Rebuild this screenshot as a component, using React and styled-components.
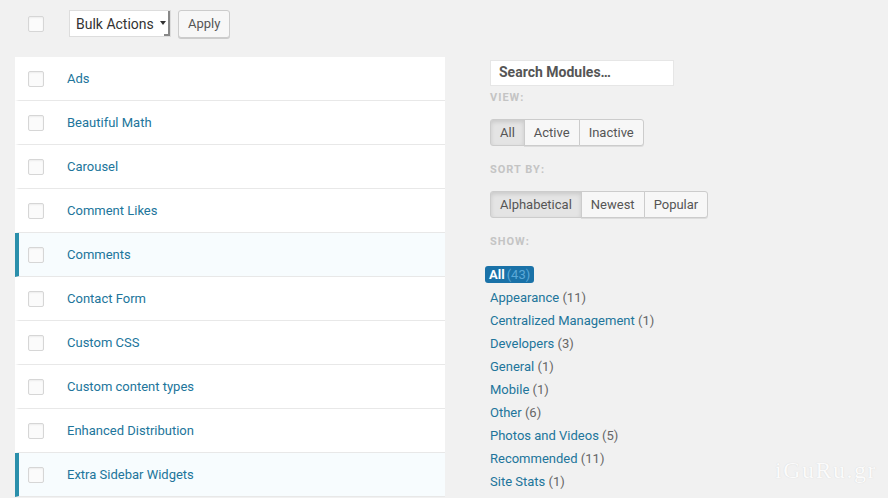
import React from "react";
import styled, { createGlobalStyle } from "styled-components";

const GlobalStyle = createGlobalStyle`
  body {
    margin: 0;
    background: #f1f1f1;
    font-family: Roboto, "Noto Sans", Arial, sans-serif;
  }
`;

const Page = styled.div`
  position: relative;
  width: 888px;
  height: 498px;
  overflow: hidden;
  background: #f1f1f1;
  display: grid;
  grid-template-columns: 430px 1fr;
  column-gap: 45px;
  padding: 0 0 0 15px;
  box-sizing: border-box;
`;

const LeftColumn = styled.div`
  display: flex;
  flex-direction: column;
`;

const Toolbar = styled.div`
  display: flex;
  align-items: center;
  height: 57px;
  padding-left: 13px;
  padding-bottom: 10px;
  box-sizing: border-box;
`;

const Checkbox = styled.span`
  display: inline-block;
  width: 14px;
  height: 14px;
  border: 1px solid #d6d6d6;
  border-radius: 2px;
  background: #fbfbfb;
  box-shadow: inset 0 1px 2px rgba(0, 0, 0, 0.06);
  flex-shrink: 0;
`;

const Select = styled.div`
  display: flex;
  align-items: center;
  margin-left: 25px;
  height: 27px;
  width: 102px;
  box-sizing: border-box;
  border: 1px solid #ddd;
  background: #fff;
  font-size: 14px;
  color: #333;
  padding-left: 6px;
`;

const SelectArrow = styled.span`
  margin-left: auto;
  width: 6px;
  height: 100%;
  border-right: 2px solid #888;
  border-bottom: 2px solid #888;
  box-sizing: border-box;
  display: flex;
  align-items: center;
  justify-content: center;
  &::before {
    content: "";
    border-left: 3px solid transparent;
    border-right: 3px solid transparent;
    border-top: 4px solid #333;
    margin-left: -6px;
  }
`;

const Button = styled.button`
  margin-left: 7px;
  height: 28px;
  padding: 0 9px;
  border: 1px solid #ccc;
  border-radius: 3px;
  background: #f7f7f7;
  box-shadow: 0 1px 0 #ccc;
  color: #555;
  font-family: inherit;
  font-size: 13px;
`;

const ModuleList = styled.div`
  display: flex;
  flex-direction: column;
  background: #fff;
`;

const Row = styled.div`
  display: flex;
  align-items: center;
  height: 44px;
  box-sizing: border-box;
  border-bottom: 1px solid #e8e8e8;
  border-left: 4px solid ${(p) => (p.$active ? "#2a8fab" : "transparent")};
  background: ${(p) => (p.$active ? "#f7fcfe" : "#fff")};
  padding-left: 9px;
`;

const ModuleName = styled.span`
  margin-left: 23px;
  font-size: 13px;
  color: #21759b;
`;

const Sidebar = styled.div`
  display: flex;
  flex-direction: column;
  padding-top: 60px;
`;

const Search = styled.div`
  width: 184px;
  height: 26px;
  box-sizing: border-box;
  background: #fff;
  border: 1px solid #e6e6e6;
  padding: 3px 8px;
  font-size: 14px;
  font-weight: 700;
  color: #555;
`;

const Label = styled.div`
  font-size: 11px;
  font-weight: 700;
  letter-spacing: 1px;
  color: #c4c4c4;
  margin-top: ${(p) => p.$top || 5}px;
  height: 14px;
`;

const Group = styled.div`
  display: flex;
  margin-top: 14px;
`;

const GroupButton = styled.span`
  height: 27px;
  box-sizing: border-box;
  display: flex;
  align-items: center;
  padding: 0 9px;
  font-size: 13px;
  color: #555;
  border: 1px solid #ccc;
  margin-left: -1px;
  background: ${(p) => (p.$on ? "#e4e4e4" : "#f7f7f7")};
  box-shadow: ${(p) => (p.$on ? "inset 0 2px 4px rgba(0,0,0,0.12)" : "0 1px 0 #ddd")};
  &:first-child {
    margin-left: 0;
    border-radius: 3px 0 0 3px;
  }
  &:last-child {
    border-radius: 0 3px 3px 0;
  }
`;

const Filters = styled.div`
  display: flex;
  flex-direction: column;
  margin-top: 17px;
  margin-left: -5px;
`;

const AllBadge = styled.span`
  align-self: flex-start;
  background: #1a72a8;
  color: #fff;
  font-size: 13px;
  font-weight: 700;
  border-radius: 3px;
  padding: 0 4px;
  height: 17px;
  line-height: 17px;
  margin-bottom: 3px;
`;

const Count = styled.span`
  font-weight: 400;
  color: #5aa8d8;
  margin-left: 2px;
`;

const Filter = styled.div`
  height: 23px;
  line-height: 23px;
  margin-left: 5px;
  font-size: 13px;
  color: #21759b;
  span {
    color: #666;
  }
`;

const Watermark = styled.div`
  position: absolute;
  right: 11px;
  bottom: 14px;
  font-family: "Liberation Serif", serif;
  font-size: 24px;
  letter-spacing: 1.5px;
  color: #fbfbfb;
  text-shadow: 0 0 1px #d0d0d0;
`;

const modules = [
  { name: "Ads" },
  { name: "Beautiful Math" },
  { name: "Carousel" },
  { name: "Comment Likes" },
  { name: "Comments", active: true },
  { name: "Contact Form" },
  { name: "Custom CSS" },
  { name: "Custom content types" },
  { name: "Enhanced Distribution" },
  { name: "Extra Sidebar Widgets", active: true },
];

const categories = [
  ["Appearance", 11],
  ["Centralized Management", 1],
  ["Developers", 3],
  ["General", 1],
  ["Mobile", 1],
  ["Other", 6],
  ["Photos and Videos", 5],
  ["Recommended", 11],
  ["Site Stats", 1],
];

export default function App() {
  return (
    <>
      <GlobalStyle />
      <Page>
        <LeftColumn>
          <Toolbar>
            <Checkbox />
            <Select>
              Bulk Actions
              <SelectArrow />
            </Select>
            <Button>Apply</Button>
          </Toolbar>
          <ModuleList>
            {modules.map((m) => (
              <Row key={m.name} $active={m.active}>
                <Checkbox />
                <ModuleName>{m.name}</ModuleName>
              </Row>
            ))}
          </ModuleList>
        </LeftColumn>

        <Sidebar>
          <Search>Search Modules…</Search>
          <Label $top={5}>VIEW:</Label>
          <Group>
            <GroupButton $on>All</GroupButton>
            <GroupButton>Active</GroupButton>
            <GroupButton>Inactive</GroupButton>
          </Group>
          <Label $top={17}>SORT BY:</Label>
          <Group>
            <GroupButton $on>Alphabetical</GroupButton>
            <GroupButton>Newest</GroupButton>
            <GroupButton>Popular</GroupButton>
          </Group>
          <Label $top={17}>SHOW:</Label>
          <Filters>
            <AllBadge>
              All<Count>(43)</Count>
            </AllBadge>
            {categories.map(([name, n]) => (
              <Filter key={name}>
                {name} <span>({n})</span>
              </Filter>
            ))}
          </Filters>
        </Sidebar>
        <Watermark>iGuRu.gr</Watermark>
      </Page>
    </>
  );
}
